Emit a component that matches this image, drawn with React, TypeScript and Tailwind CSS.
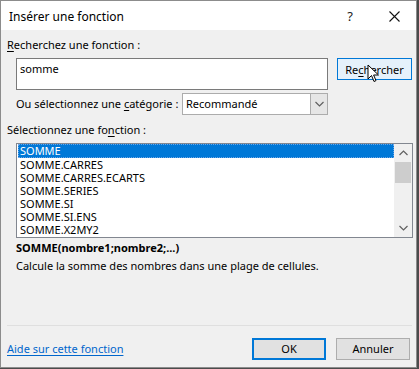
import React from "react";

const functions = [
  "SOMME",
  "SOMME.CARRES",
  "SOMME.CARRES.ECARTS",
  "SOMME.SERIES",
  "SOMME.SI",
  "SOMME.SI.ENS",
  "SOMME.X2MY2",
];

const font = "font-['Noto_Sans',sans-serif] text-[11px]";

function Chevron({ up }: { up?: boolean }) {
  return (
    <svg width="9" height="6" viewBox="0 0 9 6" fill="none">
      <path
        d={up ? "M0.5 5 L4.5 1 L8.5 5" : "M0.5 1 L4.5 5 L8.5 1"}
        stroke="#606060"
        strokeWidth="1.2"
      />
    </svg>
  );
}

export default function App() {
  return (
    <div className="w-[419px] h-[369px] bg-[#4b4b4b]">
      <div className={`relative w-[417px] h-[368px] border border-[#8c8c8c] bg-[#f0f0f0] text-black ${font}`}>
        {/* title bar */}
        <div className="flex h-[29px] items-center bg-white">
          <span className="ml-[8px] mt-[2px] flex-1 text-[12px]">Insérer une fonction</span>
          <span className="mr-[36px] mt-[2px] text-[13px] text-[#222]">?</span>
          <svg className="mr-[16px] mt-[1px]" width="11" height="11" viewBox="0 0 11 11">
            <path d="M0.5 0.5 L10.5 10.5 M10.5 0.5 L0.5 10.5" stroke="#111" strokeWidth="1.1" />
          </svg>
        </div>

        <div className="flex flex-col pl-[6px]">
          <div className="mt-[7px] h-[16px] leading-[16px]">
            <span className="underline underline-offset-2">R</span>echerchez une fonction :
          </div>

          <div className="mt-[5px] flex items-start">
            <div className="ml-[9px] h-[32px] w-[312px] border border-[#7a7a7a] bg-white px-[3px] pt-[2px] leading-[16px]">
              somme
            </div>
            <div className="ml-[9px] flex h-[22px] w-[75px] items-center justify-center border border-[#0078d7] bg-[#e5f1fb] leading-none">
              Re<span className="underline underline-offset-2">c</span>hercher
            </div>
          </div>

          <div className="mt-[3px] flex h-[22px] items-center">
            <div className="ml-[9px] w-[166px] whitespace-nowrap">
              Ou sélectionnez une <span className="underline underline-offset-2">c</span>atégorie :
            </div>
            <div className="flex h-[22px] w-[146px] items-stretch border border-[#acacac] bg-white">
              <span className="flex-1 pl-[3px] leading-[20px]">Recommandé</span>
              <span className="flex w-[17px] items-center justify-center border-l border-[#acacac] bg-[#e6e6e6]">
                <Chevron />
              </span>
            </div>
          </div>

          <div className="mt-[7px] h-[16px] leading-[16px]">
            Sélectionnez une fo<span className="underline underline-offset-2">n</span>ction :
          </div>

          <div className="ml-[9px] mt-[5px] flex h-[95px] w-[397px] border border-[#828790] bg-white">
            <div className="flex-1 pl-[1px]">
              {functions.map((f, i) => (
                <div
                  key={f}
                  className={
                    i === 0
                      ? "h-[14px] bg-[#0078d7] pl-[2px] leading-[14px] text-white outline-1 outline-dotted outline-[#6aa6e8] -outline-offset-1"
                      : "h-[13px] pl-[2px] leading-[13px]"
                  }
                >
                  {f}
                </div>
              ))}
            </div>
            <div className="flex w-[18px] flex-col items-center bg-[#f0f0f0]">
              <div className="flex h-[18px] items-center">
                <Chevron up />
              </div>
              <div className="h-[21px] w-[16px] bg-[#cdcdcd]" />
              <div className="flex-1" />
              <div className="flex h-[18px] items-center">
                <Chevron />
              </div>
            </div>
          </div>

          <div className="ml-[9px] mt-[2px] h-[16px] font-bold leading-[16px]">
            SOMME(nombre1;nombre2;...)
          </div>
          <div className="ml-[9px] mt-[2px] h-[16px] leading-[16px]">
            Calcule la somme des nombres dans une plage de cellules.
          </div>

          <div className="mt-[51px] h-px w-[405px] bg-[#dfdfdf]" />

          <div className="mt-[12px] flex h-[22px] items-center">
            <a className="flex-1 text-[#0066cc] underline underline-offset-2" href="#">
              Aide sur cette fonction
            </a>
            <div className="flex h-[22px] w-[74px] items-center justify-center border-2 border-[#0078d7] bg-[#e1e1e1]">
              OK
            </div>
            <div className="ml-[10px] mr-[6px] flex h-[22px] w-[74px] items-center justify-center border border-[#adadad] bg-[#e1e1e1]">
              Annuler
            </div>
          </div>
        </div>

        {/* mouse cursor over the search button */}
        <svg className="absolute left-[366px] top-[63px]" width="13" height="19" viewBox="0 0 13 19">
          <path
            d="M1 1 L1 15 L4.5 11.5 L7 17.5 L9 16.6 L6.6 11 L11.5 11 Z"
            fill="white"
            stroke="black"
            strokeWidth="1"
            strokeLinejoin="round"
          />
        </svg>
      </div>
    </div>
  );
}
